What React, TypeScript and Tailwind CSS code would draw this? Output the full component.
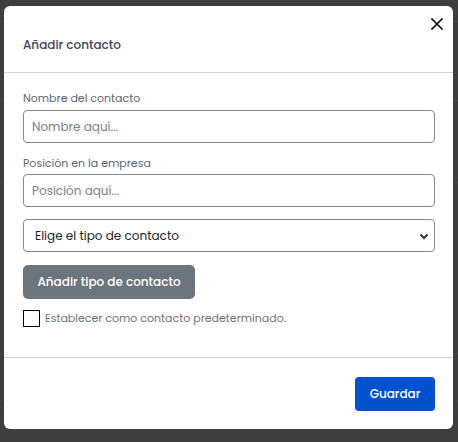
import React from "react";

const font = { fontFamily: "Poppins, Inter, 'Noto Sans', sans-serif" };

export default function App() {
  return (
    <div
      className="relative w-[458px] h-[442px] bg-[#3e3e3e] overflow-hidden flex items-start pt-[6px] pl-[4px]"
      style={font}
    >
      {/* faint page content under the overlay */}
      <div className="absolute left-0 right-0 top-[21px] h-px bg-[#474747]" />
      <div className="absolute left-0 right-0 top-[100px] h-px bg-[#474747]" />
      <div className="absolute left-0 right-0 top-[182px] h-px bg-[#474747]" />
      <div className="absolute left-0 right-0 top-[353px] h-px bg-[#474747]" />
      <div className="absolute left-0 right-0 top-[400px] h-px bg-[#444444]" />

      <div className="relative z-10 w-[449px] h-[423px] bg-white rounded-[6px] flex flex-col">
        {/* header */}
        <div className="relative h-[67px] border-b border-[#d3d3d3] flex items-center pt-[12px] px-[19px]">
          <h5 className="text-[12px] leading-[18px] font-medium text-[#3d4656]">Añadir contacto</h5>
          <button className="absolute top-[11px] right-[10px] w-[13px] h-[13px] flex items-center justify-center">
            <svg width="12" height="12" viewBox="0 0 12 12">
              <path d="M1 1L11 11M11 1L1 11" stroke="#111" strokeWidth="1.7" strokeLinecap="square" />
            </svg>
          </button>
        </div>

        {/* body */}
        <div className="flex-1 px-[19px] pt-[17px] flex flex-col">
          <label className="text-[11px] leading-[16px] text-[#5c6370] mb-[4px]">Nombre del contacto</label>
          <div className="h-[33px] w-[412px] border border-[#8a8a8a] rounded-[4px] flex items-center px-[8px]">
            <span className="text-[12px] text-[#7a7f87]">Nombre aquí...</span>
          </div>

          <label className="mt-[12px] text-[11px] leading-[16px] text-[#5c6370] mb-[3px]">Posición en la empresa</label>
          <div className="h-[33px] w-[412px] border border-[#8a8a8a] rounded-[4px] flex items-center px-[8px]">
            <span className="text-[12px] text-[#7a7f87]">Posición aquí...</span>
          </div>

          <div className="mt-[12px] h-[33px] w-[412px] border border-[#8a8a8a] rounded-[4px] flex items-center justify-between pl-[11px] pr-[4px]">
            <span className="text-[12px] text-[#212529]">Elige el tipo de contacto</span>
            <svg width="12" height="12" viewBox="0 0 12 12">
              <path d="M2.5 4.5L6 8L9.5 4.5" fill="none" stroke="#333" strokeWidth="2" />
            </svg>
          </div>

          <div className="mt-[13px]">
            <button className="h-[34px] w-[172px] bg-[#6c757d] rounded-[5px] text-white text-[12px] font-medium flex items-center justify-center">
              Añadir tipo de contacto
            </button>
          </div>

          <div className="mt-[11px] flex items-center gap-[5px]">
            <div className="w-[17px] h-[17px] border-[1.5px] border-black bg-white" />
            <span className="text-[11px] text-[#6b7280]">Establecer como contacto predeterminado.</span>
          </div>
        </div>

        {/* footer */}
        <div className="border-t border-[#d3d3d3] h-[72px] flex items-start justify-end pt-[19px] pr-[18px]">
          <button className="h-[34px] w-[80px] bg-[#0052cc] rounded-[4px] text-white text-[12px] font-medium flex items-center justify-center">
            Guardar
          </button>
        </div>
      </div>
    </div>
  );
}
